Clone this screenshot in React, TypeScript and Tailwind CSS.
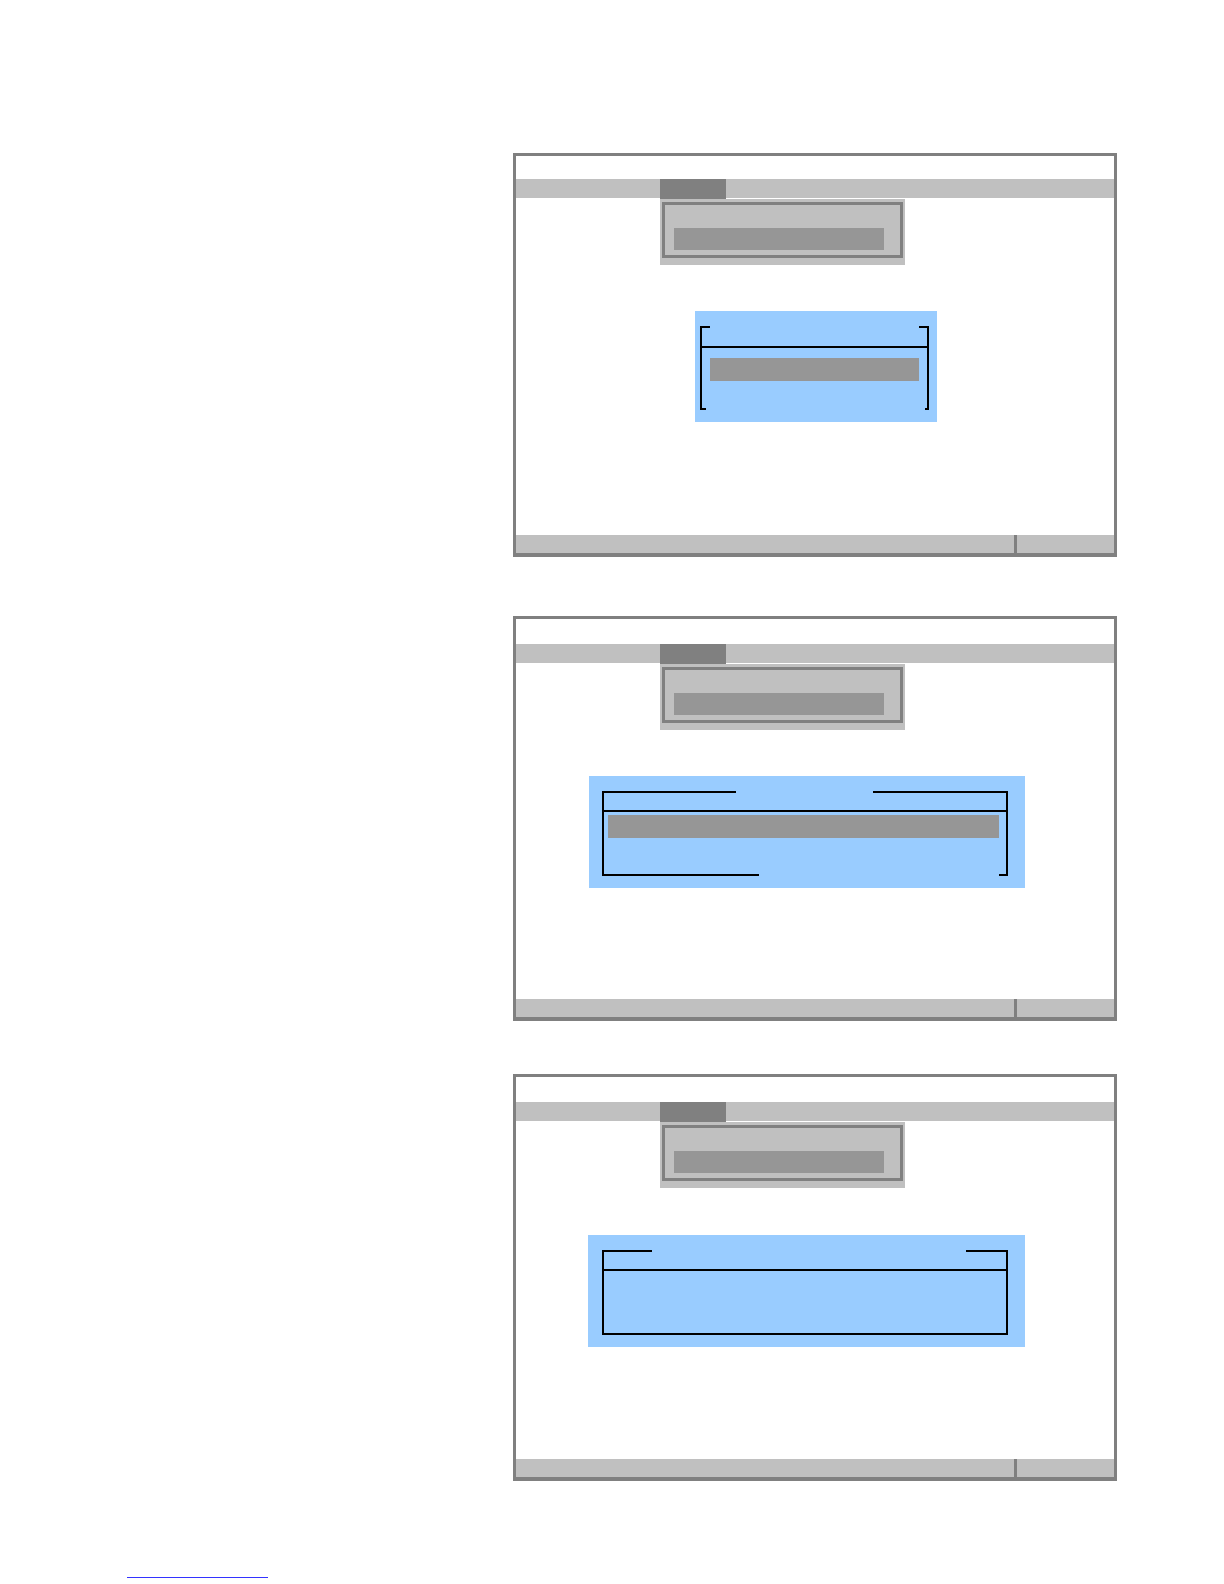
import type { ReactNode } from "react";

// one setup screen: menu bar, open pull-down, dialog, status bar
function Screen({ box, children }: { box: string; children: ReactNode }) {
  return (
    <div
      className={`flex w-[604px] flex-col border-[3px] border-b-4 border-[#808080] bg-white ${box}`}
    >
      <div className="flex h-[19px] bg-[#c0c0c0]">
        <div className="ml-[144px] h-[20px] w-[66px] bg-[#808080]" />
      </div>
      <div className="ml-[144px] mt-px h-[66px] w-[245px] bg-[#c0c0c0] pl-[2px] pt-[3px]">
        <div className="h-[56px] w-[241px] border-[3px] border-[#808080] pl-[9px] pt-[23px]">
          <div className="h-[22px] w-[210px] bg-[#969696]" />
        </div>
      </div>
      {children}
      <div className="mt-auto flex h-[18px]">
        <div className="w-[498px] bg-[#c0c0c0]" />
        <div className="w-[3px] bg-[#808080]" />
        <div className="flex-1 bg-[#c0c0c0]" />
      </div>
    </div>
  );
}

function DialogSmall() {
  return (
    <div className="ml-[179px] mt-[46px] h-[111px] w-[242px] bg-[#99ccff] pl-[5px] pt-[15px]">
      <div className="flex h-[84px] w-[229px] flex-col border-x-2 border-black">
        <div className="flex h-[22px] border-b-2 border-black">
          <div className="w-[8px] border-t-2 border-black" />
          <div className="flex-1" />
          <div className="w-[8px] border-t-2 border-black" />
        </div>
        <div className="ml-[8px] mt-[10px] h-[23px] w-[209px] bg-[#969696]" />
        <div className="mt-auto flex h-[2px]">
          <div className="w-[4px] bg-black" />
          <div className="flex-1" />
          <div className="w-[2px] bg-black" />
        </div>
      </div>
    </div>
  );
}

function DialogWide() {
  return (
    <div className="ml-[73px] mt-[46px] h-[112px] w-[436px] bg-[#99ccff] pl-[13px] pt-[15px]">
      <div className="flex h-[85px] w-[406px] flex-col border-x-2 border-black">
        <div className="flex h-[21px] border-b-2 border-black">
          <div className="w-[132px] border-t-2 border-black" />
          <div className="flex-1" />
          <div className="w-[133px] border-t-2 border-black" />
        </div>
        <div className="ml-[4px] mt-[3px] h-[23px] w-[391px] bg-[#969696]" />
        <div className="mt-auto flex h-[2px]">
          <div className="w-[155px] bg-black" />
          <div className="flex-1" />
          <div className="w-[7px] bg-black" />
        </div>
      </div>
    </div>
  );
}

function DialogEmpty() {
  return (
    <div className="ml-[72px] mt-[47px] h-[112px] w-[437px] bg-[#99ccff] pl-[14px] pt-[15px]">
      <div className="flex h-[85px] w-[406px] flex-col border-x-2 border-b-2 border-black">
        <div className="flex h-[21px] border-b-2 border-black">
          <div className="w-[48px] border-t-2 border-black" />
          <div className="flex-1" />
          <div className="w-[40px] border-t-2 border-black" />
        </div>
      </div>
    </div>
  );
}

export default function App() {
  return (
    <div className="flex h-[1584px] w-[1224px] flex-col bg-white">
      <div className="flex flex-col pl-[513px] pt-[153px]">
        <Screen box="h-[404px] pt-[23px]">
          <DialogSmall />
        </Screen>
        <div className="mt-[59px]">
          <Screen box="h-[405px] pt-[25px]">
            <DialogWide />
          </Screen>
        </div>
        <div className="mt-[53px]">
          <Screen box="h-[407px] pt-[25px]">
            <DialogEmpty />
          </Screen>
        </div>
      </div>
      <div className="ml-[127px] mt-[96px] h-px w-[141px] bg-[#3333ff]" />
    </div>
  );
}
